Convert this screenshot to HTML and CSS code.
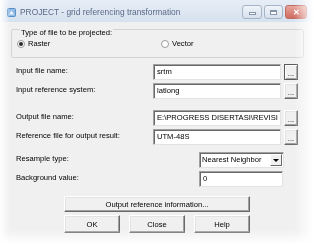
FILE: index.html
```html
<!DOCTYPE html>
<html lang="en">
<head>
    <meta charset="UTF-8">
    <meta name="viewport" content="width=device-width, initial-scale=1.0">
    <title>PROJECT - grid referencing transformation</title>
    <link rel="stylesheet" href="styles.css">
</head>
<body>
    <div class="window">
        <div class="titlebar">
            <svg class="app-icon" width="9" height="9" viewBox="0 0 9 9">
                <rect x="0.5" y="0.5" width="8" height="8" rx="1" fill="#8fbbe6" stroke="#5b8fc7"/>
                <path d="M2 6.5 L4.5 2.5 L7 6.5 Z" fill="#eef5fc"/>
            </svg>
            <span class="title">PROJECT - grid referencing transformation</span>
            <div class="caption-buttons">
                <span class="cap-btn minimize"><i></i></span>
                <span class="cap-btn maximize"><i></i></span>
                <span class="cap-btn close">&#x2715;</span>
            </div>
        </div>

        <div class="client">
            <fieldset class="group">
                <legend>Type of file to be projected:</legend>
                <label class="radio raster"><span class="radio-dot checked"></span>Raster</label>
                <label class="radio"><span class="radio-dot"></span>Vector</label>
            </fieldset>

            <div class="form">
                <div class="field-row">
                    <span class="field-label">Input file name:</span>
                    <span class="textbox">srtm</span>
                    <span class="button browse focused">...</span>
                </div>
                <div class="field-row">
                    <span class="field-label">Input reference system:</span>
                    <span class="textbox">latlong</span>
                    <span class="button browse">...</span>
                </div>
                <div class="field-row section">
                    <span class="field-label">Output file name:</span>
                    <span class="textbox">E:\PROGRESS DISERTASI\REVISI</span>
                    <span class="button browse">...</span>
                </div>
                <div class="field-row">
                    <span class="field-label">Reference file for output result:</span>
                    <span class="textbox">UTM-48S</span>
                    <span class="button browse">...</span>
                </div>
                <div class="field-row short gap-top">
                    <span class="field-label">Resample type:</span>
                    <span class="combo">
                        <span class="combo-value">Nearest Neighbor</span>
                        <span class="combo-arrow"></span>
                    </span>
                </div>
                <div class="field-row short">
                    <span class="field-label">Background value:</span>
                    <span class="textbox">0</span>
                </div>
            </div>

            <div class="actions">
                <span class="button wide">Output reference information...</span>
                <div class="button-row">
                    <span class="button">OK</span>
                    <span class="button">Close</span>
                    <span class="button">Help</span>
                </div>
            </div>
        </div>
    </div>
</body>
</html>
```

FILE: styles.css
```css
/* General Styles */
* {
    box-sizing: border-box;
    margin: 0;
    padding: 0;
}

body {
    background-color: #ffffff;
    font-family: 'Liberation Sans', Arial, sans-serif;
    font-size: 7.6px;
    line-height: 9px;
    color: #000;
}

/* Window with soft faded edges */
.window {
    width: 314px;
    height: 244px;
    overflow: hidden;
    background-color: #f0f0f0;
    -webkit-mask-image: linear-gradient(to right, transparent 0, #000 10px, #000 calc(100% - 20px), transparent 100%),
                        linear-gradient(to bottom, #000 calc(100% - 14px), transparent 100%);
    -webkit-mask-composite: source-in;
    mask-image: linear-gradient(to right, transparent 0, #000 10px, #000 calc(100% - 20px), transparent 100%),
                linear-gradient(to bottom, #000 calc(100% - 14px), transparent 100%);
    mask-composite: intersect;
}

/* Title bar */
.titlebar {
    height: 22px;
    display: flex;
    align-items: center;
    padding: 3px 7px 0 7px;
    background: linear-gradient(#e6edf6, #d6e2ef);
}

.app-icon {
    flex-shrink: 0;
}

.title {
    margin-left: 4px;
    font-size: 8.4px;
    color: #5a6986;
    white-space: nowrap;
}

.caption-buttons {
    margin-left: auto;
    align-self: flex-start;
    margin-top: 2px;
    display: flex;
    gap: 2px;
}

.cap-btn {
    height: 14px;
    width: 20px;
    border: 1px solid #a6b4c8;
    border-radius: 3px;
    background: linear-gradient(#f0f4f9, #d6e0ec);
    display: flex;
    align-items: center;
    justify-content: center;
}

.cap-btn.minimize i {
    width: 7px;
    height: 3px;
    margin-top: 3px;
    background: #fff;
    border: 1px solid #8594ab;
}

.cap-btn.maximize {
    width: 19px;
}

.cap-btn.maximize i {
    width: 7px;
    height: 5px;
    border: 1px solid #8594ab;
    border-top-width: 2px;
    background: #fff;
}

.cap-btn.close {
    width: 22px;
    border-color: #bf6a62;
    background: linear-gradient(#e7a59c, #cf6b5e);
    color: #fff;
    font-size: 8px;
    font-weight: bold;
}

/* Group box */
.group {
    margin: 0 10px 0 11px;
    border: 1px solid #d0d5da;
    border-radius: 2px;
    padding: 2px 0 9px 5px;
    display: flex;
    align-items: center;
}

.group legend {
    margin-left: 3px;
    padding: 6px 1px 0 1px;
    line-height: 9px;
}

.radio {
    display: inline-flex;
    align-items: center;
    gap: 3px;
    height: 9px;
}

.radio.raster {
    width: 144px;
}

.radio-dot {
    width: 8px;
    height: 8px;
    border-radius: 50%;
    border: 1px solid #9a9b9b;
    background: #fff;
    display: flex;
    align-items: center;
    justify-content: center;
}

.radio-dot.checked::after {
    content: "";
    width: 4px;
    height: 4px;
    border-radius: 50%;
    background: #2a2a2a;
}

/* Form rows */
.form {
    margin-top: 6px;
}

.field-row {
    display: flex;
    align-items: center;
    height: 16px;
    margin-top: 3px;
    padding-left: 16px;
}

.field-row:first-child {
    margin-top: 0;
}

.field-row.section {
    margin-top: 11px;
}

.field-row.gap-top {
    margin-top: 7px;
}

.field-label {
    width: 137px;
    margin-bottom: 3px;
    white-space: nowrap;
}

.field-row.short .field-label {
    width: 183px;
}

.textbox {
    width: 128px;
    height: 16px;
    background: #fff;
    border: 1px solid;
    border-color: #a0a0a0 #e3e3e3 #e3e3e3 #a0a0a0;
    box-shadow: inset 1px 1px 0 #696969;
    padding: 0 0 0 3px;
    line-height: 14px;
    white-space: nowrap;
    overflow: hidden;
}

.field-row.short .textbox {
    width: 84px;
}

/* Combo box */
.combo {
    width: 85px;
    height: 16px;
    background: #fff;
    border: 1px solid;
    border-color: #a0a0a0 #e3e3e3 #e3e3e3 #a0a0a0;
    box-shadow: inset 1px 1px 0 #696969;
    display: flex;
    padding: 1px 1px 1px 2px;
}

.combo-value {
    flex: 1;
    line-height: 12px;
    white-space: nowrap;
    overflow: hidden;
}

.combo-arrow {
    width: 12px;
    background: #f0f0f0;
    border: 1px solid;
    border-color: #fff #696969 #696969 #fff;
    display: flex;
    align-items: center;
    justify-content: center;
}

.combo-arrow::after {
    content: "";
    border-left: 3px solid transparent;
    border-right: 3px solid transparent;
    border-top: 3px solid #000;
}

/* Buttons */
.button {
    display: flex;
    align-items: center;
    justify-content: center;
    background: #f0f0f0;
    border: 1px solid;
    border-color: #fff #696969 #696969 #fff;
    box-shadow: inset -1px -1px 0 #a0a0a0, inset 1px 1px 0 #e3e3e3;
    white-space: nowrap;
}

.button.browse {
    width: 14px;
    height: 16px;
    margin-left: 3px;
    padding-top: 3px;
}

.button.browse.focused {
    border-color: #5a5a5a;
    box-shadow: inset 1px 1px 0 #fff, inset -1px -1px 0 #a0a0a0;
}

.actions {
    margin-top: 9px;
    padding-left: 64px;
}

.button.wide {
    width: 186px;
    height: 16px;
}

.button-row {
    display: flex;
    gap: 9px;
    margin-top: 3px;
}

.button-row .button {
    width: 56px;
    height: 18px;
}
```
